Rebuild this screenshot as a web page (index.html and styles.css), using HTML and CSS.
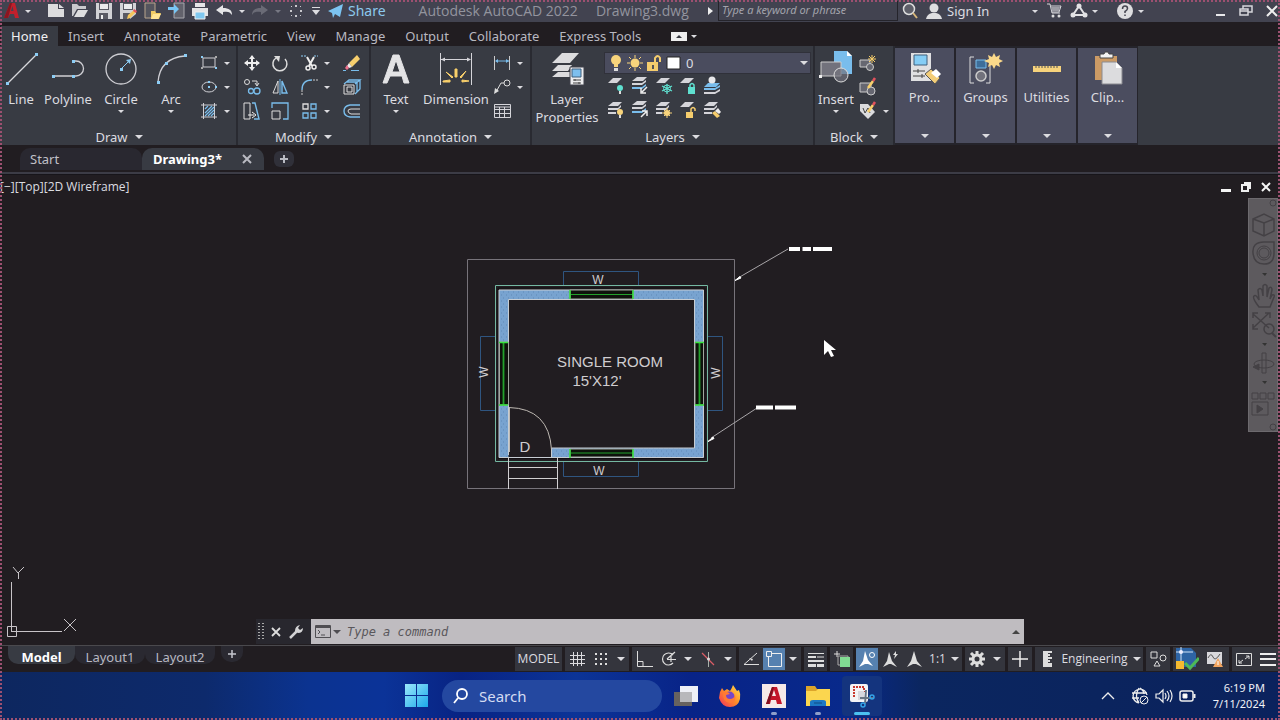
FILE: index.html
```html
<!DOCTYPE html>
<html lang="en">
<head>
  <meta charset="UTF-8" />
  <meta name="viewport" content="width=device-width, initial-scale=1.0" />
  <title>Autodesk AutoCAD 2022 - Drawing3.dwg</title>
  <link rel="stylesheet" href="styles.css">
</head>

<body>
  <!-- Title bar -->
  <header class="titlebar">
    <button class="app-menu" aria-label="Application menu">
      <svg width="16" height="18" viewBox="0 0 16 18"><path d="M0 16 6 1h5l4 15h-4l-1-4H6l-2 4zM7 9h2.500L8.500 4z" fill="#c1202c"/><path d="M0 16 6 1h2L4 16z" fill="#8a1620"/></svg>
      <span class="caret"></span>
    </button>
    <div class="quick-access">
      <button class="qa" aria-label="New"><svg width="20" height="20" viewBox="0 0 20 20"><path d="M2 3h10v5h6v8H2z" fill="#dcdcde"/><path d="M13 3l5 4h-5z" fill="#dcdcde"/></svg></button>
      <button class="qa" aria-label="Open"><svg width="20" height="20" viewBox="0 0 20 20"><path d="M2 3h5l2 2h7v3H7L3 15H2z" fill="#c9c9cd"/><path d="M8 9h10l-4 7H4z" fill="#dedee0"/></svg></button>
      <button class="qa" aria-label="Save"><svg width="20" height="20" viewBox="0 0 20 20"><path d="M2 2h16v16H2z" fill="#d2d2d6"/><path d="M5 2h10v7H5zM5 12h9v6H5z" fill="#5a5a64"/><path d="M6 3h8v5H6z" fill="#ebebed"/><path d="M7 14h2v4H7z" fill="#eee"/></svg></button>
      <button class="qa" aria-label="Save As"><svg width="20" height="20" viewBox="0 0 20 20"><path d="M2 2h16v11l-6 5H2z" fill="#d2d2d6"/><path d="M5 2h10v7H5zM5 12h7v6H5z" fill="#5a5a64"/><path d="M6 3h8v5H6z" fill="#ebebed"/><path d="M9 18l1-4 6-5 2 2-6 6z" fill="#f5c65c"/><path d="M15 10l1-2 3 2-1 2z" fill="#e3525d"/></svg></button>
      <button class="qa" aria-label="Open from Web"><svg width="20" height="20" viewBox="0 0 20 20"><path d="M3 2h10v15H3z" fill="#55555e" stroke="#b9a58c"/><path d="M9 10h4l1 2h5l-2 6H9z" fill="#f1cc66"/><path d="M11 13h8l-3 5H9z" fill="#ffe496"/></svg></button>
      <button class="qa" aria-label="Save to Web"><svg width="20" height="20" viewBox="0 0 20 20"><path d="M8 2h10v15H8z" fill="#62626c" stroke="#a7a7ad"/><path d="M2 6h6V3l5 5-5 5v-4H2z" fill="#78c6f5"/></svg></button>
      <button class="qa" aria-label="Plot"><svg width="20" height="20" viewBox="0 0 20 20"><path d="M5 2h10v4H5zM2 7h16v8H2z" fill="#e4e4e6"/><path d="M5 11h10v7H5z" fill="#7fc7ef" stroke="#eee"/></svg></button>
      <button class="qa" aria-label="Undo"><svg width="20" height="20" viewBox="0 0 20 20"><path d="M2 9l7-5v3c6 0 9 2 9 7-2-3-4-4-9-3v3z" fill="#e6e6e8"/></svg></button>
      <button class="qa-drop" aria-label="Undo list"><span class="caret"></span></button>
      <button class="qa" aria-label="Redo"><svg width="20" height="20" viewBox="0 0 20 20"><path d="M18 9l-7-5v3c-6 0-9 2-9 7 2-3 4-4 9-3v3z" fill="#6a6b76"/></svg></button>
      <button class="qa-drop" aria-label="Redo list"><span class="caret dim"></span></button>
      <button class="qa" aria-label="Touch mode"><svg width="20" height="20" viewBox="0 0 20 20" fill="#c8c8cd"><path d="M9 4h2v2H9zM9 14h2v2H9zM4 9h2v2H4zM14 9h2v2h-2zM5 5h1v1H5zM14 5h1v1h-1zM14 14h1v1h-1zM5 14h1v1H5z"/></svg></button>
      <button class="qa-more" aria-label="Customize"><svg width="10" height="10" viewBox="0 0 10 10"><path d="M1 1h8v1H1zM1 4h8L5 9z" fill="#dcdce0"/></svg></button>
    </div>
    <button class="share"><svg width="16" height="14" viewBox="0 0 16 14"><path d="M0 7 15 0l-3 13-5-3-2 4-1-5zM5 9l7-6-6 7z" fill="#7cc4f2"/></svg>Share</button>
    <h1 class="app-title"><span>Autodesk AutoCAD 2022</span><span>Drawing3.dwg</span></h1>
    <span class="title-arrow"></span>
    <input class="help-search" type="text" placeholder="Type a keyword or phrase" aria-label="Help search">
    <button class="qa" aria-label="Find"><svg width="18" height="18" viewBox="0 0 18 18" fill="none"><circle cx="8" cy="7" r="5.500" stroke="#ddd" stroke-width="1.500" fill="#5e5f69"/><path d="M12 11l4 5" stroke="#d8b77a" stroke-width="2"/></svg></button>
    <button class="sign-in"><svg width="18" height="18" viewBox="0 0 18 18" fill="#dedee0"><circle cx="9" cy="6" r="4.500"/><path d="M1 17q1-5 6-6h4q5 1 6 6z"/></svg>Sign In<span class="caret"></span></button>
    <button class="qa cart" aria-label="App store"><svg width="18" height="16" viewBox="0 0 18 16" fill="none"><path d="M2 1h3l2 9h8M6 3h10l-2 6H7" stroke="#d8d8dc"/><path d="M6 4h9l-1 4H7z" fill="#9d9da5"/><circle cx="8" cy="13" r="1.500" fill="#ddd"/><circle cx="14" cy="13" r="1.500" fill="#ddd"/></svg></button>
    <button class="autodesk-app" aria-label="Autodesk app"><svg width="18" height="16" viewBox="0 0 18 16"><path d="M9 3 3 12h12z" fill="none" stroke="#e3e3e5" stroke-width="2"/><circle cx="9" cy="3" r="2.500" fill="#e3e3e5"/><circle cx="3" cy="12" r="2.500" fill="#e3e3e5"/><circle cx="15" cy="12" r="2.500" fill="#e3e3e5"/></svg><span class="caret"></span></button>
    <button class="help" aria-label="Help"><svg width="18" height="18" viewBox="0 0 18 18"><circle cx="9" cy="9" r="8" fill="#dedee0"/><path d="M6.500 7q0-3 2.500-3t2.500 2.500q0 1.500-2.500 3V11M9 12.500v1.500" fill="none" stroke="#454650" stroke-width="1.500"/></svg><span class="caret"></span></button>
    <div class="window-buttons">
      <button aria-label="Minimize"><svg width="12" height="12" viewBox="0 0 12 12"><path d="M2 9h9v2H2z" fill="#e8e8ea"/></svg></button>
      <button aria-label="Restore"><svg width="14" height="12" viewBox="0 0 14 12" fill="none" stroke="#d6d6da" stroke-width="1.500"><path d="M1 4h8v6H1zM1 6h8M4 4V1h9v6H9"/></svg></button>
      <button aria-label="Close"><svg width="12" height="12" viewBox="0 0 12 12"><path d="M1 1l10 10M11 1 1 11" stroke="#eee" stroke-width="2"/></svg></button>
    </div>
  </header>

  <!-- Ribbon tabs -->
  <nav class="ribbon-tabs">
    <button class="active">Home</button>
    <button>Insert</button>
    <button>Annotate</button>
    <button>Parametric</button>
    <button>View</button>
    <button>Manage</button>
    <button>Output</button>
    <button>Collaborate</button>
    <button>Express Tools</button>
    <button class="minimize" aria-label="Minimize ribbon"><svg width="16" height="9" viewBox="0 0 16 9"><path d="M0 0h16v9H0z" fill="#eee"/><path d="M5 6l3-3 3 3z" fill="#35363e"/></svg><span class="caret"></span></button>
  </nav>

  <!-- Ribbon -->
  <section class="ribbon">
    <div class="panel draw">
      <div class="panel-body">
        <button class="tool w-line"><svg width="36" height="36" viewBox="0 0 36 36"><path d="M5 32 34 3" stroke="#d8d8dc" stroke-width="1.300"/><path d="M3 31h3v3H3zM32 2h3v3h-3z" fill="#8ccdf5"/></svg>Line</button>
        <button class="tool w-poly"><svg width="36" height="36" viewBox="0 0 36 36"><path d="M4 25h20M24 10h2a7 7 0 0 1 0 15h-2" stroke="#cfcfd4" stroke-width="1.300" fill="none"/><path d="M2 24h3v3H2zM22 24h3v3h-3zM22 9h3v3h-3z" fill="#8ccdf5"/></svg>Polyline</button>
        <button class="tool w-mid"><svg width="36" height="36" viewBox="0 0 36 36"><circle cx="18" cy="18" r="15" stroke="#cfcfd4" stroke-width="1.300" fill="none"/><path d="M18 18l7-7" stroke="#8ccdf5"/><path d="M17 17h3v3h-3zM28 8l-5 1 4 4z" fill="#8ccdf5"/></svg>Circle<span class="caret"></span></button>
        <button class="tool w-mid"><svg width="36" height="36" viewBox="0 0 36 36"><path d="M5 31Q7 7 32 5" stroke="#cfcfd4" stroke-width="1.300" fill="none"/><path d="M4 30h3v3H4zM12 11h3v3h-3zM31 3h3v3h-3z" fill="#8ccdf5"/></svg>Arc<span class="caret"></span></button>
        <div class="stack">
          <button class="mini" aria-label="Rectangle"><svg width="20" height="20" viewBox="0 0 20 20"><path d="M3 5h12v9H3z" stroke="#cfcfd4" fill="none"/><path d="M1 3h2v2H1zM15 14h2v2h-2z" fill="#8ccdf5"/><path d="M1 14h2v2H1zM15 3h2v2h-2z" fill="#aaa"/></svg><span class="caret"></span></button>
          <button class="mini" aria-label="Ellipse"><svg width="20" height="20" viewBox="0 0 20 20"><ellipse cx="9" cy="10" rx="7" ry="5" stroke="#cfcfd4" fill="none"/><path d="M8 9h2v2H8zM8 4h2v2H8zM15 9h2v2h-2z" fill="#8ccdf5"/></svg><span class="caret"></span></button>
          <button class="mini" aria-label="Hatch"><svg width="20" height="20" viewBox="0 0 20 20"><path d="M1 4h16M1 16h16M3.500 2v16M14.500 2v16" stroke="#cfcfd4"/><path d="M5 8l3-3M5 12l7-7M5 15l9-9M8 15l6-6M11 15l3-3" stroke="#7dbfee" stroke-width="1.200"/></svg><span class="caret"></span></button>
        </div>
      </div>
      <button class="panel-title">Draw<span class="caret big"></span></button>
    </div>

    <div class="panel modify">
      <div class="panel-body">
        <div class="modify-grid">
          <button class="mini" aria-label="Move"><svg width="20" height="20" viewBox="0 0 20 20"><path d="M3 10h14M10 3v14" stroke="#eee" stroke-width="2"/><path d="M10 2l3 4H7zM10 18l3-4H7zM2 10l4-3v6zM18 10l-4-3v6z" fill="#eee"/></svg></button>
          <button class="mini" aria-label="Rotate"><svg width="20" height="20" viewBox="0 0 20 20"><path d="M6 5a7 7 0 1 0 9 1" stroke="#ddd" stroke-width="1.500" fill="none"/><path d="M4 3h6l-1 6z" fill="#ddd"/></svg></button>
          <button class="mini" aria-label="Trim"><svg width="20" height="20" viewBox="0 0 20 20" fill="none"><path d="M1 3h6M14 3h4" stroke="#8ccdf5" stroke-dasharray="2 1"/><path d="M7 4l5 9M14 4 9 13" stroke="#eee" stroke-width="2"/><circle cx="8" cy="15" r="2" stroke="#eee" stroke-width="1.500"/><circle cx="14" cy="14" r="2" stroke="#eee" stroke-width="1.500"/></svg><span class="caret"></span></button>
          <button class="mini" aria-label="Erase"><svg width="20" height="20" viewBox="0 0 20 20"><path d="M7 10 15 2l3 4-8 8z" fill="#f7cf6d"/><path d="M7 10l3 4-3 1-2-2z" fill="#eee"/><path d="M5 12l2 3-2 2-2-2z" fill="#f0708c"/><path d="M9 17.500h8M1 17.500h3" stroke="#79bdec"/></svg></button>
          <button class="mini" aria-label="Copy"><svg width="20" height="20" viewBox="0 0 20 20" fill="none"><circle cx="5" cy="5" r="2.500" stroke="#ddd"/><path d="M10 4h5v4M13 6l2 3 2-3" stroke="#ddd"/><circle cx="9" cy="14" r="2.500" stroke="#79bdec" stroke-width="1.300"/><circle cx="15" cy="14" r="3" stroke="#79bdec" stroke-width="1.300"/></svg></button>
          <button class="mini" aria-label="Mirror"><svg width="20" height="20" viewBox="0 0 20 20" fill="none"><path d="M8 4v12H3z" stroke="#ddd"/><path d="M12 4v12h5z" stroke="#79bdec" stroke-width="1.400"/><path d="M10 2v16" stroke="#79bdec"/></svg></button>
          <button class="mini" aria-label="Fillet"><svg width="20" height="20" viewBox="0 0 20 20" fill="none"><path d="M2 18v-5M13 3h6" stroke="#ccc" stroke-dasharray="2 1"/><path d="M2 13q0-10 10-10" stroke="#79bdec" stroke-width="1.400"/></svg><span class="caret"></span></button>
          <button class="mini" aria-label="Explode"><svg width="20" height="20" viewBox="0 0 20 20" fill="none"><path d="M2 7l5-4h11l-5 4M18 3v9l-5 5M5 5h10v10" stroke="#79bdec" stroke-width="1.300"/><path d="M2 8h10v9H2zM5 10h5v5H5z" stroke="#ddd"/></svg></button>
          <button class="mini" aria-label="Stretch"><svg width="20" height="20" viewBox="0 0 20 20" fill="none"><path d="M2 2h6v16H2z" stroke="#ddd"/><path d="M10 2h3l4 16h-5" stroke="#79bdec" stroke-width="1.400"/><path d="M6 14h6M10 11l4 3-4 3" stroke="#eee"/></svg></button>
          <button class="mini" aria-label="Scale"><svg width="20" height="20" viewBox="0 0 20 20" fill="none"><path d="M2 7V2h16v16h-5" stroke="#79bdec" stroke-width="1.300"/><path d="M2 10h8v8H2z" stroke="#ddd"/></svg></button>
          <button class="mini" aria-label="Array"><svg width="20" height="20" viewBox="0 0 20 20" fill="none"><path d="M3 3h5v5H3z" stroke="#ddd" stroke-width="1.300"/><path d="M11 3h5v5h-5zM3 12h5v5H3zM11 12h5v5h-5z" stroke="#79bdec" stroke-width="1.300"/></svg><span class="caret"></span></button>
          <button class="mini" aria-label="Offset"><svg width="20" height="20" viewBox="0 0 20 20" fill="none"><path d="M18 4H8q-6 1-6 6t6 6h10" stroke="#79bdec" stroke-width="1.400"/><path d="M18 8H9q-3 0-3 2t3 3h9" stroke="#ddd"/></svg></button>
        </div>
      </div>
      <button class="panel-title">Modify<span class="caret big"></span></button>
    </div>

    <div class="panel annotation">
      <div class="panel-body">
        <button class="tool w-mid"><svg width="36" height="36" viewBox="0 0 36 36"><path d="M5 32 15 4h6l10 28h-5l-2-7H12l-3 7zM14 21h8L18 9z" fill="#e3e3e5" stroke="#e3e3e5"/></svg>Text<span class="caret"></span></button>
        <button class="tool w-wide"><svg width="36" height="36" viewBox="0 0 36 36"><path d="M2.500 2v32M33.500 2v32M3 8.500h29" stroke="#d5d5da" fill="none"/><path d="M3 8.500l4-2v4zM33 8.500l-4-2v4z" fill="#d5d5da"/><path d="M17 18h2v8h-2zM8 21l6 6 1-1zM28 20l-6 6 1 1zM5 30l7-1v2H5zM31 30l-7-1v2z" fill="#f8cf6b" stroke="#f8cf6b"/></svg>Dimension</button>
        <div class="stack">
          <button class="mini" aria-label="Linear"><svg width="20" height="20" viewBox="0 0 20 20"><path d="M1.500 3v14M16.500 3v14" stroke="#ccc"/><path d="M3 8h13" stroke="#79bdec"/><path d="M2 8l3-2v4zM16 8l-3-2v4z" fill="#79bdec"/></svg><span class="caret"></span></button>
          <button class="mini" aria-label="Leader"><svg width="20" height="20" viewBox="0 0 20 20" fill="none"><circle cx="14" cy="6" r="3" stroke="#ddd"/><path d="M11 6H8L3 15" stroke="#ddd"/><path d="M1 17l1-6 4 3z" fill="#ddd"/></svg><span class="caret"></span></button>
          <button class="mini" aria-label="Table"><svg width="20" height="20" viewBox="0 0 20 20" fill="none"><path d="M1.500 3.500h16v13h-16zM2 8.500h16M2 12.500h16M6.500 6v11M11.500 6v11M2 6h16" stroke="#d5d5da"/></svg></button>
        </div>
      </div>
      <button class="panel-title">Annotation<span class="caret big"></span></button>
    </div>

    <div class="panel layers">
      <div class="panel-body">
        <button class="tool w-wide clip"><svg width="36" height="36" viewBox="0 0 36 36"><path d="M13 2h17l-9 10H3zM9 14h14l-4 6H3zM9 21h12v5H3z" fill="#dcdcde"/><path d="M21 16h14v18H21z" fill="#ececee" stroke="#41434c"/><path d="M23 18h9v8h-9z" fill="#7dbfee" stroke="#3f5f7c"/><path d="M24 29h8M24 32h8M26 28v2M30 31v2" stroke="#444"/></svg>Layer<br>Properties</button>
        <div class="layer-tools">
          <label class="layer-select">
            <svg width="76" height="20" viewBox="0 0 76 20"><circle cx="9" cy="7" r="5" fill="#f8d47c"/><path d="M7 11h4v3H7z" fill="#f8d47c"/><path d="M7 15h4v3H7z" fill="#ddd"/><circle cx="28" cy="10" r="4.500" fill="#f8d47c"/><path d="M28 2v3M28 15v3M20 10h3M33 10h3M22 4l2 2M34 4l-2 2M22 16l2-2M34 16l-2-2" stroke="#f8d47c"/><path d="M40 9h11v9H40z" fill="#f5cd6d"/><path d="M48 9V5q3-4 5 0v4" stroke="#f5cd6d" stroke-width="2" fill="none"/><path d="M45 12h2v4h-2z" fill="#555"/><path d="M60 4h13v12H60z" fill="#fff" stroke="#222"/></svg>
            <select aria-label="Layer"><option>0</option></select>
            <span class="caret big"></span>
          </label>
          <div class="layer-grid">
            <button class="mini" aria-label="Off"><svg width="20" height="20" viewBox="0 0 20 20"><path d="M7 2h9l-5 5H2z" fill="#d5d5da"/><circle cx="14" cy="12" r="3" fill="#5fe0d0"/><path d="M13 15h2v3h-2z" fill="#ddd"/></svg></button>
            <button class="mini" aria-label="Isolate"><svg width="20" height="20" viewBox="0 0 20 20"><path d="M7 1h10l-4 4H2zM2 7h10l4-3v2l-4 3H2z" fill="#d5d5da"/><path d="M2 11h10l4-3v2l-4 3H2z" fill="#79bdec"/><path d="M17 11l-5 5M11 12v5h5" stroke="#eee" stroke-width="1.500" fill="none"/></svg></button>
            <button class="mini" aria-label="Freeze"><svg width="20" height="20" viewBox="0 0 20 20"><path d="M7 2h9l-5 5H2z" fill="#d5d5da"/><path d="M13 8v10M8 10l10 5M8 15l10-5" stroke="#5fe0d0" stroke-width="1.300"/><circle cx="13" cy="12.500" r="3.500" fill="none" stroke="#5fe0d0"/></svg></button>
            <button class="mini" aria-label="Lock"><svg width="20" height="20" viewBox="0 0 20 20"><path d="M7 2h9l-5 5H2z" fill="#d5d5da"/><path d="M10 11h7v7h-7z" fill="#5fe0d0"/><path d="M12 11V9q2-3 4 0v2" stroke="#5fe0d0" stroke-width="1.500" fill="none"/></svg></button>
            <button class="mini" aria-label="Make current"><svg width="20" height="20" viewBox="0 0 20 20"><path d="M6 7h12l-4 4H2zM2 12h11l5-3v2l-5 3H2z" fill="#79bdec"/><path d="M2 16h11l5-3v2l-5 3H2z" fill="#d5d5da"/><circle cx="10" cy="4" r="3.500" fill="#e8e8ea"/></svg></button>
            <button class="mini" aria-label="On"><svg width="20" height="20" viewBox="0 0 20 20"><path d="M7 2h9l-4 4H2zM2 8h10l3-3v2l-3 3H2zM2 12h8v2H2z" fill="#d5d5da"/><circle cx="14" cy="12" r="3" fill="#f8d47c"/><path d="M13 15h2v3h-2z" fill="#ddd"/></svg></button>
            <button class="mini" aria-label="Unisolate"><svg width="20" height="20" viewBox="0 0 20 20"><path d="M7 1h10l-4 4H2zM2 7h10l4-3v2l-4 3H2z" fill="#d5d5da"/><path d="M2 11h10l4-3v2l-4 3H2z" fill="#79bdec"/><path d="M11 17l6-6M12 11h5v5" stroke="#eee" stroke-width="1.500" fill="none"/></svg></button>
            <button class="mini" aria-label="Thaw"><svg width="20" height="20" viewBox="0 0 20 20"><path d="M7 2h9l-4 4H2zM2 8h10l3-3v2l-3 3H2zM2 12h6v2H2z" fill="#d5d5da"/><circle cx="13" cy="13" r="3" fill="#f8d47c"/><path d="M13 8v10M8 13h10M10 10l6 6M16 10l-6 6" stroke="#f8d47c"/></svg></button>
            <button class="mini" aria-label="Unlock"><svg width="20" height="20" viewBox="0 0 20 20"><path d="M7 2h9l-5 5H2z" fill="#d5d5da"/><path d="M8 12h7v6H8z" fill="#f5cd6d"/><path d="M13 12V9q2-3 4 0v2" stroke="#f5cd6d" stroke-width="1.500" fill="none"/></svg></button>
            <button class="mini" aria-label="Match"><svg width="20" height="20" viewBox="0 0 20 20"><path d="M7 2h9l-4 4H2zM2 8h10l3-3v2l-3 3H2zM2 12h8v2H2z" fill="#d5d5da"/><path d="M10 13l3-2 5 5-3 2z" fill="#f5cd6d"/><path d="M13 11l3-3 3 4-2 2z" fill="#eee"/></svg></button>
          </div>
        </div>
      </div>
      <button class="panel-title">Layers<span class="caret big"></span></button>
    </div>

    <div class="panel block">
      <div class="panel-body">
        <button class="tool w-insert"><svg width="36" height="36" viewBox="0 0 36 36"><path d="M16 0h13l5 5v18H16z" fill="#79bdec"/><path d="M29 0v5h5z" fill="#fff"/><path d="M3 11h20v14H3z" fill="#72727c" stroke="#ccc"/><circle cx="23" cy="24" r="7" fill="#72727c" fill-opacity=".7" stroke="#ddd"/><path d="M1 24h3v3H1z" fill="#eee"/></svg>Insert<span class="caret"></span></button>
        <div class="stack">
          <button class="mini" aria-label="Create block"><svg width="20" height="20" viewBox="0 0 20 20" fill="#666771" stroke="#ccc"><path d="M1 7h10v7H1z"/><circle cx="11" cy="14" r="3.500"/><path d="M13 2v8M9 6h8M10 3l6 6M16 3l-6 6" stroke="#f8cf6b"/></svg></button>
          <button class="mini" aria-label="Edit block"><svg width="20" height="20" viewBox="0 0 20 20" fill="#666771" stroke="#ccc"><path d="M1 6h11v9H1z"/><circle cx="12" cy="14" r="4"/><path d="M9 11l5-7" stroke="#f8cf6b" stroke-width="2.500"/><path d="M14 4l2-3" stroke="#e3525d" stroke-width="2.500"/></svg></button>
          <button class="mini" aria-label="Edit attributes"><svg width="20" height="20" viewBox="0 0 20 20"><path d="M1 3h8l7 8-7 7-8-8z" fill="#dcdcde"/><path d="M4 7l2 5 3-5 2 5" stroke="#444" fill="none"/><path d="M9 11l5-7" stroke="#f8cf6b" stroke-width="2.500"/><path d="M14 4l2-3" stroke="#e3525d" stroke-width="2.500"/></svg><span class="caret"></span></button>
        </div>
      </div>
      <button class="panel-title">Block<span class="caret big"></span></button>
    </div>

    <div class="collapsed-panels">
      <button class="collapsed"><svg width="36" height="36" viewBox="0 0 36 36"><path d="M4 2h20v28H4z" fill="#e0e0e2"/><path d="M7 4h13v10H7z" fill="#85cdf5" stroke="#3f5f7c"/><path d="M6 20h12M6 25h12M11 18v4M15 23v4" stroke="#444"/><path d="M18 23l6-5 9 9-5 6z" fill="#f3cd78" stroke="#555"/><path d="M24 22l5-4 5 5-4 4z" fill="#fff"/></svg>Pro...<span class="caret big"></span></button>
      <button class="collapsed"><svg width="36" height="36" viewBox="0 0 36 36"><path d="M6 6H2v26h4M18 32h4V15" stroke="#ddd" fill="none"/><path d="M8 9h10v8H8z" fill="#3e6e99" stroke="#79bdec"/><circle cx="13" cy="25" r="5" fill="#72727c" stroke="#ccc" stroke-width="1.500"/><path d="M26 2l2 4 4-2-1 4 4 2-4 2 1 4-4-2-2 4-2-4-4 2 1-4-5-2 5-2-1-4 4 2z" fill="#fbd98a"/></svg>Groups<span class="caret big"></span></button>
      <button class="collapsed"><svg width="36" height="36" viewBox="0 0 36 36"><path d="M4 15h28v6H4z" fill="#f7d37c"/><path d="M7 15v2M10 15v2M13 15v2M16 15v2M19 15v2M22 15v2M25 15v2M28 15v2" stroke="#555"/></svg>Utilities<span class="caret big"></span></button>
      <button class="collapsed"><svg width="36" height="36" viewBox="0 0 36 36"><path d="M5 5h22v24H5z" fill="#cc9b65"/><path d="M10 3h4l1-2h3l1 2h4v4H10z" fill="#f3f3f3" stroke="#444"/><path d="M12 11h14l6 6v16H12z" fill="#dcdcde" stroke="#8a8a90"/><path d="M26 11v6h6z" fill="#fff"/></svg>Clip...<span class="caret big"></span></button>
    </div>
  </section>

  <!-- Open files -->
  <nav class="file-tabs">
    <button class="file-tab start">Start</button>
    <div class="file-tab active"><span>Drawing3*</span><button aria-label="Close drawing"><svg width="10" height="10" viewBox="0 0 10 10"><path d="M1 1l8 8M9 1 1 9" stroke="#b9bac2" stroke-width="2"/></svg></button></div>
    <button class="new-tab" aria-label="New drawing"><svg width="10" height="10" viewBox="0 0 10 10"><path d="M5 1v8M1 5h8" stroke="#b9bac2" stroke-width="2"/></svg></button>
  </nav>

  <!-- Drawing area -->
  <main class="canvas">
    <div class="viewport-bar">
      <span>[−][Top][2D Wireframe]</span>
      <div class="viewport-buttons">
        <button aria-label="Minimize viewport"><svg width="12" height="12" viewBox="0 0 12 12"><path d="M1 8h10v3H1z" fill="#f5f5f5"/></svg></button>
        <button aria-label="Restore viewport"><svg width="12" height="12" viewBox="0 0 12 12"><path d="M2 4h6v6H2zM4 2h6v6" fill="none" stroke="#eee" stroke-width="2"/></svg></button>
        <button aria-label="Close viewport"><svg width="12" height="12" viewBox="0 0 12 12"><path d="M2 2l8 8M10 2l-8 8" stroke="#f5f5f5" stroke-width="2"/></svg></button>
      </div>
    </div>

    <!-- Floor plan -->
    <svg class="plan" width="380" height="255" viewBox="460 240 380 255" fill="none">
      <defs>
        <pattern id="hatch" width="5" height="6" patternUnits="userSpaceOnUse">
          <path d="M0 0h5v6H0z" fill="#78a3d0"/>
          <path d="M1 1h1M3 4h1" stroke="#6089b6"/>
        </pattern>
      </defs>
      <path d="M467.500 259.500h267v229h-267z" stroke="#77737a"/>
      <path d="M563.500 285v-13.500h75V285M563.500 462v14.500h75V462M495 336.500h-14.500v74H495M708 336.500h14.500v74H708" stroke="#2f5580"/>
      <path d="M495.500 285.500h212v176h-212z" stroke="#74b8a2"/>
      <path d="M498 288h207v170.500H498z" stroke="#131013"/>
      <path d="M499 290h204.500v167.500H551.500V448H694.500V299.500H508.500v158H499z" fill="url(#hatch)"/>
      <path d="M508.500 457.500H499V290h204.500v167.500H508.500M551.500 457.500V448h143V299.500h-186V455" stroke="#c7cdd3"/>
      <path d="M570 290h63v9h-63zM570 449h63v8h-63zM499.500 342h9v63h-9zM695 342h8.500v63H695z" fill="#0e120c" stroke="#a0a69e"/>
      <path d="M571 294.500h62M571 453h62" stroke="#23a12c"/>
      <path d="M503.500 343v62M699.500 343v62" stroke="#23a12c" stroke-width="1.800"/>
      <path d="M570 290v9M633 290v9M570 449v9M633 449v9M499 342.500h9M499 405h9M695 342.500h9M695 405h9" stroke="#37e23d" stroke-width="1.500"/>
      <path d="M509 407.500q40 1 42.500 42M509.500 407v45" stroke="#bdb8b2"/>
      <path d="M508.500 457v32M557.500 458v31M508.500 467.500h49M508.500 478.500h49" stroke="#d2d0d2"/>
      <path d="M788 249l-50 29M757 408l-46 30" stroke="#a8a5a8"/>
      <path d="M735 280.500l5-4 1 1.500zM708 441.500l5-4.500 1 1.500z" fill="#fff" stroke="#fff"/>
      <path d="M789 247h11v4h-11zM802.500 247h8.500v4h-8.500zM813 247h19v4h-19zM756 405.500h17v4h-17zM775 405.500h21v4h-21z" fill="#fff"/>
      <g class="plan-text">
        <text class="room" x="610" y="367">SINGLE ROOM</text>
        <text class="room" x="597" y="386">15'X12'</text>
        <text class="room" x="525" y="452">D</text>
        <text x="598" y="284">W</text>
        <text x="599" y="475">W</text>
        <text transform="translate(488 372) rotate(-90)">W</text>
        <text transform="translate(720 373) rotate(-90)">W</text>
      </g>
    </svg>

    <svg class="cursor" width="14" height="20" viewBox="0 0 14 20"><path d="M1 1v15l4-4 3 6 3-1-3-6h5z" fill="#fff"/></svg>

    <!-- UCS icon -->
    <svg class="ucs" width="76" height="74" viewBox="0 0 76 74" fill="none" stroke="#c8c4c8"><path d="M9.500 16v50M9 65.500h51M5.500 60.500h9v10h-9zM11 1l5 6 6-6M16.500 7v6M62 53l12 12M74 53 62 65"/></svg>

    <!-- Navigation bar -->
    <aside class="navbar">
      <svg width="28" height="232" viewBox="0 0 28 232" fill="none" stroke="#444145"><circle cx="24" cy="4" r="3"/><path d="M4 20l11-5 10 5v12l-10 5-11-5zM4 20l11 4 10-4M15 24v13" stroke-width="1.500"/><path d="M15 43h10v11q0 11-10 11T4 54t11-11z" stroke-width="1.500"/><circle cx="15" cy="54" r="7"/><circle cx="15" cy="54" r="5"/><path d="M10 108q-7-9-5-11t5 4l-1-10q2-3 4 0l1 6V87q2-3 4 0v11l2-9q3-2 3 2l-2 9 2-4q3-1 2 2l-4 10z" stroke-width="1.500"/><path d="M4 115l16 14M20 114 4 129M4 119v-5h5M16 114h5v5M4 125v5h5" stroke-width="1.500"/><circle cx="20" cy="130" r="5" stroke-width="1.500"/><path d="M23 134l4 4" stroke-width="2"/><path d="M13 154h4v20h-4z"/><ellipse cx="15" cy="165" rx="10" ry="4"/><path d="M4 168l6-3v6z" fill="#444145"/><path d="M3 194h6v6H3zM11 194h6v6h-6zM19 194h6v6h-6zM3 203h16v13H3z"/><path d="M8 206l6 4-6 4z" fill="#444145"/><circle cx="24" cy="228" r="3"/><path d="M13 74h5l-2 3zM13 144h5l-2 3zM13 182h5l-2 3z" fill="#333" stroke="none"/></svg>
    </aside>

    <!-- Command line -->
    <div class="command">
      <div class="command-tools">
        <svg width="6" height="18" viewBox="0 0 6 18"><path d="M1 0v18M5 0v18" stroke="#aaa" stroke-width="2" stroke-dasharray="1 2"/></svg>
        <button aria-label="Close"><svg width="10" height="10" viewBox="0 0 10 10"><path d="M1 1l8 8M9 1 1 9" stroke="#ddd" stroke-width="1.800"/></svg></button>
        <button aria-label="Customize"><svg width="16" height="16" viewBox="0 0 16 16"><path d="M2 14 9 7" stroke="#d2d2d4" stroke-width="2.500"/><path d="M15 4q0 5-5 5L7 7q0-5 5-6l-2 3 2 2z" fill="#d2d2d4"/></svg></button>
      </div>
      <div class="command-field">
        <button aria-label="Recent commands"><svg width="16" height="13" viewBox="0 0 16 13" fill="none" stroke="#504e52"><path d="M.5.500h15v12H.5z"/><path d="M1 2h14" stroke-width="2"/><path d="M3 5l2 2-2 2M6 10h4"/></svg><span class="caret big dark"></span></button>
        <input type="text" placeholder="Type a command" aria-label="Command">
        <span class="up"></span>
      </div>
    </div>
  </main>

  <!-- Layout tabs and status bar -->
  <footer class="statusbar">
    <nav class="layouts">
      <button class="active">Model</button>
      <button>Layout1</button>
      <button>Layout2</button>
      <button class="add" aria-label="New layout"><svg width="8" height="8" viewBox="0 0 8 8"><path d="M4 0v8M0 4h8" stroke="#c5c6ce" stroke-width="1.500"/></svg></button>
    </nav>
    <div class="status-tools">
      <div class="group"><button class="model">MODEL</button></div>
      <div class="group">
        <button class="st" aria-label="Grid"><svg width="18" height="18" viewBox="0 0 18 18"><path d="M5.500 2v14M9.500 2v14M13.500 2v14M2 5.500h15M2 9.500h15M2 13.500h15" stroke="#dcdce0"/></svg></button>
        <button class="st" aria-label="Snap"><svg width="18" height="18" viewBox="0 0 18 18"><path d="M3 4h12M3 9h12M3 14h12" stroke="#ddd" stroke-width="2" stroke-dasharray="2 3"/></svg></button>
        <button class="drop" aria-label="Snap settings"><span class="caret big"></span></button>
      </div>
      <div class="group">
        <button class="st" aria-label="Ortho"><svg width="18" height="18" viewBox="0 0 18 18" fill="none" stroke="#ddd"><path d="M2.500 1v15.500H18M3 11.500h5V16"/></svg></button>
        <button class="st" aria-label="Polar"><svg width="18" height="18" viewBox="0 0 18 18" fill="none" stroke="#ddd"><path d="M14 13a6 6 0 1 1 0-8M8 9.500h9M8 9l8-7M12 6v6" stroke-width="1.200"/></svg></button>
        <button class="drop" aria-label="Polar settings"><span class="caret big"></span></button>
        <button class="st" aria-label="Isodraft"><svg width="18" height="18" viewBox="0 0 18 18"><path d="M3 3l12 12" stroke="#d95d66" stroke-width="1.300"/><path d="M9.500 2v15" stroke="#aab0aa"/><circle cx="9.500" cy="9" r="1.500" fill="#ddd"/></svg></button>
        <button class="drop" aria-label="Isodraft settings"><span class="caret big"></span></button>
      </div>
      <div class="group">
        <button class="st" aria-label="Object snap tracking"><svg width="18" height="18" viewBox="0 0 18 18"><path d="M15 3 2 14.500h15" stroke="#ddd" fill="none"/><path d="M7 8l4 1-1 2z" fill="#ddd"/></svg></button>
        <button class="st on" aria-label="Object snap"><svg width="18" height="18" viewBox="0 0 18 18" fill="none" stroke="#eee"><path d="M7 3.500h9.500v13h-13V7M1.500 1.500h5v5h-5z"/></svg></button>
        <button class="drop" aria-label="Object snap settings"><span class="caret big"></span></button>
      </div>
      <div class="group"><button class="st slim" aria-label="Lineweight"><svg width="18" height="18" viewBox="0 0 18 18"><path d="M1 3.500h16M10 7h7" stroke="#ddd"/><path d="M1 7h8M1 11h16" stroke="#ddd" stroke-width="2"/><path d="M1 15.500h8M10 15.500h7" stroke="#ddd" stroke-width="3"/></svg></button></div>
      <div class="group"><button class="st slim" aria-label="Transparency"><svg width="18" height="18" viewBox="0 0 18 18"><path d="M4 1v6M1 4h6" stroke="#ddd"/><path d="M5 6h10v9H5z" stroke="#aaa" fill="none"/><path d="M7 7h10v10H7z" fill="#81dc93"/></svg></button></div>
      <div class="group">
        <button class="st on" aria-label="Annotation visibility"><svg width="18" height="18" viewBox="0 0 18 18"><path d="M7 1l3 9 5 6-5-2H7l-6 3 4-6z" fill="#fff"/><circle cx="14" cy="5" r="2.500" fill="none" stroke="#fff"/></svg></button>
        <button class="st" aria-label="Auto scale"><svg width="18" height="18" viewBox="0 0 18 18" fill="#ddd"><path d="M8 2l3 9 5 6-6-3H8l-6 3 4-6z"/><path d="M15 1l-3 4h2l-1 4 4-5h-2z"/></svg></button>
        <button class="st" aria-label="Annotation scale"><svg width="18" height="18" viewBox="0 0 18 18"><path d="M9 1l3 10 5 6-6-3H8l-6 3 4-6z" fill="#ddd"/></svg></button>
        <button class="text-drop scale">1:1<span class="caret big"></span></button>
      </div>
      <div class="group">
        <button class="st" aria-label="Workspace"><svg width="18" height="18" viewBox="0 0 18 18"><circle cx="9" cy="9" r="4" fill="none" stroke="#ddd" stroke-width="3"/><path d="M9 1v3M9 14v3M1 9h3M14 9h3M3 3l3 3M12 12l3 3M15 3l-3 3M3 15l3-3" stroke="#ddd" stroke-width="3"/></svg></button>
        <button class="drop" aria-label="Workspace settings"><span class="caret big"></span></button>
      </div>
      <div class="group"><button class="st" aria-label="Annotation monitor"><svg width="18" height="18" viewBox="0 0 18 18"><path d="M9 1v16M1 9h16" stroke="#eee" stroke-width="1.500"/></svg></button></div>
      <div class="group">
        <button class="st" aria-label="Units"><svg width="18" height="18" viewBox="0 0 18 18"><path d="M5 1h9v2h-4v1h2v2h-2v1h4v2h-4v1h2v2h-2v1h4v4H5z" fill="#ddd"/></svg></button>
        <button class="text-drop units">Engineering<span class="caret big"></span></button>
      </div>
      <div class="group"><button class="st" aria-label="Quick properties"><svg width="18" height="18" viewBox="0 0 18 18" fill="none" stroke="#ddd"><path d="M2 2h6v6H2zM8 11l3 5H5z"/><circle cx="14" cy="8" r="3"/></svg></button></div>
      <div class="group">
        <button class="st large" aria-label="Graphics performance"><svg width="24" height="24" viewBox="0 0 24 24"><path d="M1 1h15l5 5v14H1z" fill="#2e64a4"/><path d="M6 0v11M1 5h17M6 11v5" stroke="#cfe2f6"/><circle cx="6" cy="5" r="2" fill="#eef"/><path d="M1 14h8v8H1z" fill="#f5b92f"/><path d="M10 16l5 5 9-10" stroke="#4dba57" stroke-width="3" fill="none"/></svg></button>
        <button class="st large" aria-label="Notifications"><svg width="18" height="18" viewBox="0 0 18 18"><path d="M1 2h15v12H1z" fill="#d8d8dc"/><path d="M2 8q3-6 5-1t7-3" stroke="#555" fill="none"/><path d="M12 8l5 9H7z" fill="#f2a45f"/><path d="M12 11v4" stroke="#fff"/></svg></button>
      </div>
      <div class="group">
        <button class="st" aria-label="Clean screen"><svg width="18" height="18" viewBox="0 0 18 18" fill="none" stroke="#ddd"><path d="M1.500 3.500h15v12h-15zM10 9l4-3M11 6h3v3M8 10l-4 3M4 10v3h3"/></svg></button>
        <button class="st" aria-label="Customization"><svg width="18" height="18" viewBox="0 0 18 18"><path d="M1 4h16M1 9h16M1 15h16" stroke="#eee" stroke-width="2"/></svg></button>
      </div>
    </div>
  </footer>

  <!-- Windows taskbar -->
  <footer class="taskbar">
    <div class="tasks">
      <button class="win" aria-label="Start menu"><svg width="24" height="24" viewBox="0 0 24 24"><defs><linearGradient id="win" x2="1" y2="1"><stop stop-color="#9be8fb"/><stop offset="1" stop-color="#1ba9ea"/></linearGradient></defs><path d="M0 0h11v11H0zM12 0h11v11H12zM0 12h11v11H0zM12 12h11v11H12z" fill="url(#win)"/></svg></button>
      <label class="search"><svg width="16" height="16" viewBox="0 0 16 16" fill="none" stroke="#fff" stroke-width="1.800"><circle cx="9" cy="6" r="5"/><path d="M5 10l-4 5"/></svg><input type="text" placeholder="Search" aria-label="Search"></label>
      <button class="task" aria-label="Task view"><svg width="24" height="24" viewBox="0 0 24 24"><path d="M0 8h18v14H0z" fill="#67625f"/><path d="M6 2h18v16H6z" fill="#eef0f6"/><path d="M6 8h12v10H6z" fill="#b8b8bb"/></svg></button>
      <button class="task" aria-label="Firefox"><svg width="24" height="24" viewBox="0 0 24 24"><defs><linearGradient id="fox" x1="1" x2="0" y2="1"><stop stop-color="#ffe34c"/><stop offset=".5" stop-color="#ff8a28"/><stop offset="1" stop-color="#f02b62"/></linearGradient></defs><path d="M2 8l2-4 2 3 3-2 3 2q2-3 3-6 2 3 4 6l2-1q2 4 1 9-2 8-10 8T1 14z" fill="url(#fox)"/><circle cx="11.500" cy="12.500" r="5" fill="#7546c9"/><path d="M5 8q5-1 7 2l-4 1q0 4 4 4t5-4q2 7-5 8-8-1-7-11" fill="#ff7a35"/></svg></button>
      <button class="task open" aria-label="AutoCAD"><svg width="24" height="24" viewBox="0 0 24 24"><path d="M0 0h24v24H0z" fill="#f5e9e8"/><path d="M4 20 10 3h5l5 17h-5l-1-4H9l-1 4zM10 12h4l-2-6z" fill="#c3152a"/><path d="M4 20 10 3h2L7 20z" fill="#7e1020"/></svg></button>
      <button class="task open" aria-label="File Explorer"><svg width="24" height="24" viewBox="0 0 24 24"><path d="M0 2h9l2 3h12v17H0z" fill="#dca52b"/><path d="M0 7h10l2-2h12v17H0z" fill="#fbd64f"/><path d="M4 22v-4q0-2 3-2h10q3 0 3 2v4z" fill="#1c78c5"/><path d="M8 19h8" stroke="#104b82"/></svg></button>
      <button class="task current" aria-label="Snipping Tool"><svg width="26" height="26" viewBox="0 0 26 26"><rect x="1" y="1" width="18" height="18" rx="2" fill="#f4f4f6"/><path d="M5 14V4h10v5" fill="none" stroke="#c8382e" stroke-width="2" stroke-dasharray="2 1"/><path d="M9 8h6v9H9z" fill="#d8d8de"/><path d="M17 7l-1 14M11 15h13" stroke="#697584" stroke-width="2"/><circle cx="14" cy="22" r="2" fill="none" stroke="#35a4e8" stroke-width="1.500"/><circle cx="23" cy="14" r="2" fill="none" stroke="#35a4e8" stroke-width="1.500"/></svg></button>
    </div>
    <div class="tray">
      <button aria-label="Hidden icons"><svg width="14" height="10" viewBox="0 0 14 10"><path d="M1 8l6-6 6 6" fill="none" stroke="#eee" stroke-width="1.300"/></svg></button>
      <button class="quick-settings" aria-label="Network, volume and battery">
        <svg width="18" height="18" viewBox="0 0 18 18" fill="none" stroke="#eee"><path d="M16 8A7 7 0 1 0 8 16M1 6h15M1 11h7M8 16Q3 9 8 1M9 1q4 3 4 6" stroke-width="1.300"/><circle cx="13" cy="13" r="4"/><path d="M10 16l6-6"/></svg>
        <svg width="18" height="18" viewBox="0 0 18 18" fill="none" stroke="#eee"><path d="M1 7h3l4-4v12l-4-4H1zM10 6q2 3 0 6M12 4q4 5 0 10M15 3q4 6 0 12" stroke-width="1.200"/></svg>
        <svg width="18" height="18" viewBox="0 0 18 18" fill="none" stroke="#eee"><rect x="1" y="4" width="13" height="10" rx="2" stroke-width="1.500"/><path d="M4 7h4v4H4z" fill="#fff"/><path d="M15.500 7v4" stroke-width="2"/></svg>
      </button>
      <button class="clock"><span>6:19 PM</span><span>7/11/2024</span></button>
    </div>
  </footer>

  <div class="capture-frame"></div>
</body>
</html>
```
FILE: styles.css
```css
* {
  box-sizing: border-box;
}

body {
  margin: 0;
  height: 100vh;
  display: flex;
  flex-direction: column;
  position: relative;
  overflow: hidden;
  background: #211d21;
  color: #dcdce0;
  font-family: "Noto Sans", "Open Sans", sans-serif;
  font-size: 13px;
  line-height: 18px;
}

button,
input,
select {
  margin: 0;
  padding: 0;
  border: 0;
  background: none;
  color: inherit;
  font: inherit;
}

button {
  display: flex;
  align-items: center;
  justify-content: center;
  flex: none;
  white-space: nowrap;
}

svg {
  display: block;
  flex: none;
}

.caret {
  flex: none;
  width: 0;
  border: 3px solid transparent;
  border-top-color: #dcdce0;
  border-bottom: 0;
}

.caret.big {
  border-width: 4px;
  border-bottom: 0;
}

.caret.dim {
  border-top-color: #777883;
}

.caret.dark {
  border-top-color: #504e52;
}

/* title bar */
.titlebar {
  display: flex;
  align-items: center;
  flex: none;
  height: 22px;
  padding: 0 2px;
  background: #424350;
}

.app-menu {
  width: 42px;
  gap: 5px;
  padding-right: 12px;
}

.quick-access {
  display: flex;
  align-items: center;
}

.qa {
  width: 24px;
  height: 20px;
}

.qa-drop {
  width: 12px;
}

.qa-more {
  width: 16px;
}

.share {
  gap: 4px;
  margin-left: 4px;
  color: #8cc9ee;
  font-size: 14px;
}

.app-title {
  display: flex;
  gap: 18px;
  margin: 0 0 0 33px;
  color: #93949e;
  font-family: "Open Sans", sans-serif;
  font-size: 14px;
  font-weight: normal;
}

.title-arrow {
  margin-left: auto;
  border: 4px solid transparent;
  border-left: 5px solid #eee;
  border-right: 0;
}

.help-search {
  width: 180px;
  height: 20px;
  margin-left: 5px;
  padding: 0 3px 2px;
  border: 1px solid #25242b;
  border-top: 0;
  color: #a3a4ac;
  font-size: 11px;
  font-style: italic;
}

.help-search::placeholder {
  color: #a3a4ac;
}

.sign-in {
  gap: 4px;
  width: 116px;
  justify-content: flex-start;
  padding-left: 3px;
}

.sign-in .caret {
  margin-left: auto;
}

.cart {
  margin-left: 4px;
}

.autodesk-app,
.help {
  gap: 4px;
  width: 36px;
}

.help {
  margin-left: 10px;
}

.window-buttons {
  display: flex;
  gap: 13px;
  margin-left: 66px;
}

/* ribbon tabs */
.ribbon-tabs {
  display: flex;
  align-items: flex-end;
  flex: none;
  height: 24px;
  padding-left: 1px;
  color: #b8b8c0;
}

.ribbon-tabs button {
  height: 20px;
  padding: 0 10px;
}

.ribbon-tabs .active {
  background: #383b43;
  color: #f0f0f2;
}

.ribbon-tabs .minimize {
  gap: 4px;
  padding-left: 20px;
}

/* ribbon */
.ribbon {
  display: flex;
  flex: none;
  height: 99px;
  background: #383b43;
}

.panel {
  display: flex;
  flex-direction: column;
  border-right: 2px solid #292a31;
}

.panel-body {
  display: flex;
  height: 82px;
  padding-top: 5px;
}

.panel-title {
  gap: 7px;
  height: 17px;
  overflow: hidden;
}

.draw {
  width: 238px;
  padding-left: 2px;
}

.modify {
  width: 133px;
}

.annotation {
  width: 161px;
}

.layers {
  width: 283px;
}

.block {
  width: 80px;
}

.tool {
  display: flex;
  flex-direction: column;
  justify-content: flex-start;
  height: 72px;
}

.tool svg {
  margin-bottom: 3px;
}

.tool .caret {
  margin-top: 2px;
}

.tool.clip {
  overflow: hidden;
}

.w-line {
  width: 38px;
}

.w-poly {
  width: 56px;
}

.w-mid {
  width: 50px;
}

.w-wide {
  width: 70px;
}

.w-insert {
  width: 42px;
}

.stack,
.modify-grid {
  display: grid;
  grid-auto-rows: 24px;
}

.mini {
  justify-content: flex-start;
  height: 24px;
  padding-left: 4px;
  gap: 4px;
}

.stack .mini {
  padding-left: 2px;
}

.draw .mini {
  padding-left: 4px;
}

.modify-grid {
  grid-template-columns: 28px 30px 42px 28px;
}

.layer-tools {
  flex: 1;
  padding: 1px 2px 0;
}

.layer-select {
  display: flex;
  align-items: center;
  height: 22px;
  padding: 0 2px;
  border: 1px solid #30313a;
  background: #4a4c5e;
}

.layer-select select {
  flex: 1;
  appearance: none;
  padding-left: 3px;
}

.layer-grid {
  display: grid;
  grid-template-columns: repeat(5, 24px);
}

.layer-grid .mini {
  padding-left: 2px;
}

.collapsed-panels {
  display: flex;
  gap: 2px;
  padding: 2px 1px 2px 0;
  background: #25242b;
}

.collapsed {
  display: flex;
  flex-direction: column;
  justify-content: flex-start;
  width: 59px;
  padding: 3px 0 5px;
  background: #4b4d5f;
}

.collapsed svg {
  margin-bottom: 1px;
}

.collapsed .caret {
  margin-top: auto;
}

/* file tabs */
.file-tabs {
  display: flex;
  align-items: flex-end;
  flex: none;
  height: 29px;
  padding: 0 0 2px 20px;
  border-bottom: 2px solid #3c3c46;
}

.file-tab {
  display: flex;
  align-items: center;
  width: 122px;
  height: 22px;
  border-radius: 10px 10px 0 0;
  background: #292830;
  color: #c0c0c8;
}

.file-tab.start {
  justify-content: flex-start;
  padding-left: 10px;
}

.file-tab.active {
  justify-content: space-between;
  padding: 0 12px 0 11px;
  background: #383b43;
  color: #fff;
  font-weight: bold;
}

.new-tab {
  width: 20px;
  height: 16px;
  margin: 0 0 3px 10px;
  border-radius: 6px;
  background: #303039;
}

/* drawing area */
.canvas {
  flex: 1;
  position: relative;
  overflow: hidden;
  border-top: 1px solid #17151a;
}

.viewport-bar {
  display: flex;
  justify-content: space-between;
  padding: 3px 8px 0 0;
  font-family: "Open Sans", sans-serif;
  font-size: 12px;
}

.viewport-buttons {
  display: flex;
  gap: 8px;
}

.plan {
  position: absolute;
  left: 460px;
  top: 65px;
}

.plan-text {
  fill: #d0cdd0;
  font-family: "Liberation Sans", sans-serif;
  font-size: 12px;
  text-anchor: middle;
}

.room {
  font-size: 15px;
}

.cursor {
  position: absolute;
  left: 823px;
  top: 164px;
}

.ucs {
  position: absolute;
  left: 2px;
  bottom: 5px;
}

.navbar {
  position: absolute;
  right: 2px;
  top: 23px;
  width: 30px;
  height: 234px;
  border: 1px solid #6d6a6e;
  background: #5d5a5e;
}

.command {
  position: absolute;
  left: 20%;
  right: 20%;
  bottom: 1px;
  display: flex;
  height: 25px;
}

.command-tools {
  display: flex;
  align-items: center;
  gap: 7px;
  padding: 0 7px 0 2px;
  background: #28272e;
}

.command-field {
  display: flex;
  flex: 1;
  align-items: center;
  padding: 0 4px;
  background: #bfbcc0;
}

.command-field button {
  gap: 2px;
}

.command-field input {
  flex: 1;
  padding-left: 6px;
  font: italic 12px "DejaVu Sans Mono", monospace;
}

.command-field input::placeholder {
  color: #59575b;
}

.up {
  border: 4px solid transparent;
  border-top: 0;
  border-bottom-color: #444;
}

/* layouts and status bar */
.statusbar {
  display: flex;
  justify-content: space-between;
  flex: none;
  height: 27px;
  border-top: 1px solid #4a494d;
}

.layouts {
  display: flex;
  padding-left: 8px;
}

.layouts button {
  width: 70px;
  height: 18px;
  padding-top: 4px;
  border-radius: 0 0 10px 10px;
  background: #2a2931;
  color: #b8b8c2;
}

.layouts .active {
  width: 67px;
  background: #383b43;
  color: #fff;
  font-weight: bold;
}

.layouts .add {
  width: 22px;
  height: 16px;
  margin-left: 6px;
  padding: 0;
}

.status-tools {
  display: flex;
  gap: 3px;
  padding: 1px 0;
  font-family: "Open Sans", sans-serif;
  font-size: 12px;
}

.group {
  display: flex;
  align-items: center;
  background: #34353d;
}

.st {
  width: 24px;
  height: 22px;
}

.st.slim {
  width: 23px;
}

.st.large {
  width: 28px;
}

.st.on {
  width: 22px;
  background: #5681b0;
}

.drop {
  width: 16px;
  height: 22px;
}

.model {
  width: 47px;
}

.text-drop {
  gap: 5px;
  height: 22px;
}

.scale {
  width: 36px;
}

.units {
  width: 84px;
}

.model,
.text-drop {
  font-weight: 500;
}

/* taskbar */
.taskbar {
  display: flex;
  align-items: center;
  justify-content: center;
  flex: none;
  position: relative;
  height: 48px;
  background: linear-gradient(90deg, #0d275f 0%, #0d2a6c 16%, #0b3390 24%, #0b3398 30%, #082383 36%, #0c3497 45%, #082387 54%, #08298b 66%, #0b265f 72%, #0b225d 100%);
  color: #f0f2f8;
}

.tasks {
  display: flex;
  align-items: center;
  margin-left: 3px;
}

.win {
  width: 36px;
}

.search {
  display: flex;
  align-items: center;
  gap: 10px;
  width: 220px;
  height: 32px;
  margin: 0 2px 0 7px;
  padding-left: 11px;
  border-radius: 16px;
  background: #2448a0;
}

.search input {
  width: 150px;
  font-size: 15px;
}

.search input::placeholder {
  color: #d5dcf2;
}

.task {
  position: relative;
  width: 40px;
  height: 40px;
  margin: 0 2px;
}

.task.open::after,
.task.current::after {
  content: "";
  position: absolute;
  left: 50%;
  bottom: 1px;
  width: 6px;
  height: 3px;
  margin-left: -3px;
  border-radius: 2px;
  background: #8f9fca;
}

.task.current {
  border-radius: 4px;
  background: #14347e;
}

.task.current::after {
  width: 16px;
  margin-left: -8px;
  background: #4cc2f1;
}

.tray {
  display: flex;
  align-items: center;
  gap: 16px;
  position: absolute;
  right: 15px;
  top: 0;
  height: 48px;
}

.quick-settings {
  gap: 6px;
}

.clock {
  flex-direction: column;
  align-items: flex-end;
  font-size: 11px;
  line-height: 16px;
}

.capture-frame {
  position: absolute;
  inset: 0;
  border: 2px dotted #9c5070;
  pointer-events: none;
}
```
